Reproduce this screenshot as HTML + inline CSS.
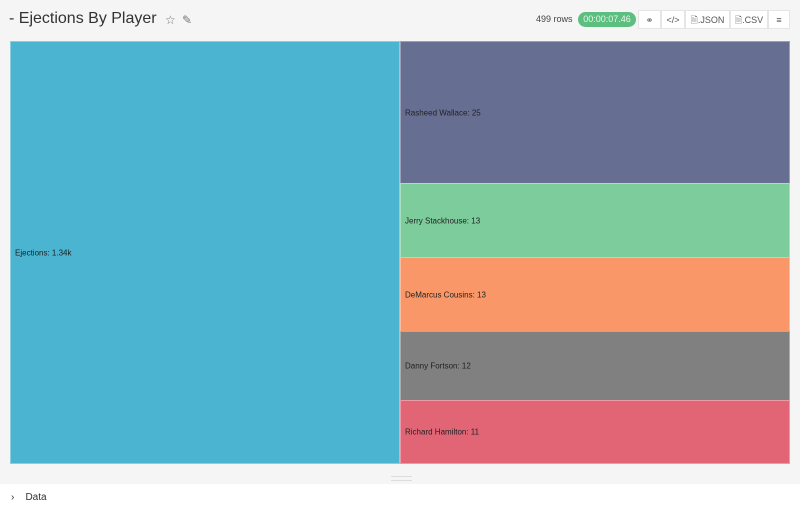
<!DOCTYPE html>
<html><head><style>
body{margin:0;width:800px;height:527px;background:#fff;font-family:"Liberation Sans",sans-serif;position:relative;overflow:hidden}
.top{position:absolute;left:0;top:0;width:800px;height:484px;background:#f5f5f5}
.title{position:absolute;left:9px;top:10px;font-size:16px;color:#333;white-space:nowrap}
.ic{position:absolute;top:13px;font-size:12px;color:#777}
.rows{position:absolute;left:536px;top:14px;font-size:9px;color:#444}
.pill{position:absolute;left:578px;top:12px;width:58px;height:15px;border-radius:8px;background:#5cbf7f;color:#e8f7ec;font-size:9px;text-align:center;line-height:15px}
.btn{position:absolute;top:10px;height:19px;background:#fff;border:1px solid #e5e5e5;font-size:9px;color:#555;text-align:center;line-height:19px;box-sizing:border-box}
.r{position:absolute;font-size:8px;color:#222;box-sizing:border-box;border:1px solid rgba(255,255,255,.35)}
.r span{position:absolute;left:4px;top:50%;transform:translateY(-50%)}
.data{position:absolute;left:11px;top:492px;font-size:10px;color:#333}
</style></head><body>
<div class="top"></div>
<div class="title">- Ejections By Player</div>
<div class="ic" style="left:165px">☆</div>
<div class="ic" style="left:182px">✎</div>
<div class="rows">499 rows</div>
<div class="pill">00:00:07.46</div>
<div class="btn" style="left:638px;width:23px">⚭</div>
<div class="btn" style="left:661px;width:24px">&lt;/&gt;</div>
<div class="btn" style="left:685px;width:45px">🗎.JSON</div>
<div class="btn" style="left:730px;width:38px">🗎.CSV</div>
<div class="btn" style="left:768px;width:22px">≡</div>
<div class="r" style="left:10px;top:41px;width:390px;height:423px;background:#4ab4d1"><span>Ejections: 1.34k</span></div>
<div class="r" style="left:400px;top:41px;width:390px;height:143px;background:#666e92"><span>Rasheed Wallace: 25</span></div>
<div class="r" style="left:400px;top:183px;width:390px;height:75px;background:#7dcc9c"><span>Jerry Stackhouse: 13</span></div>
<div class="r" style="left:400px;top:257px;width:390px;height:75px;background:#fa9769"><span>DeMarcus Cousins: 13</span></div>
<div class="r" style="left:400px;top:331px;width:390px;height:70px;background:#808080"><span>Danny Fortson: 12</span></div>
<div class="r" style="left:400px;top:400px;width:390px;height:64px;background:#e26576"><span>Richard Hamilton: 11</span></div>
<div style="position:absolute;left:391px;top:476px;width:21px;height:3px;border-top:1px solid #ddd;border-bottom:1px solid #ddd"></div>
<div class="data">›&nbsp;&nbsp;&nbsp;&nbsp;Data</div>
</body></html>
